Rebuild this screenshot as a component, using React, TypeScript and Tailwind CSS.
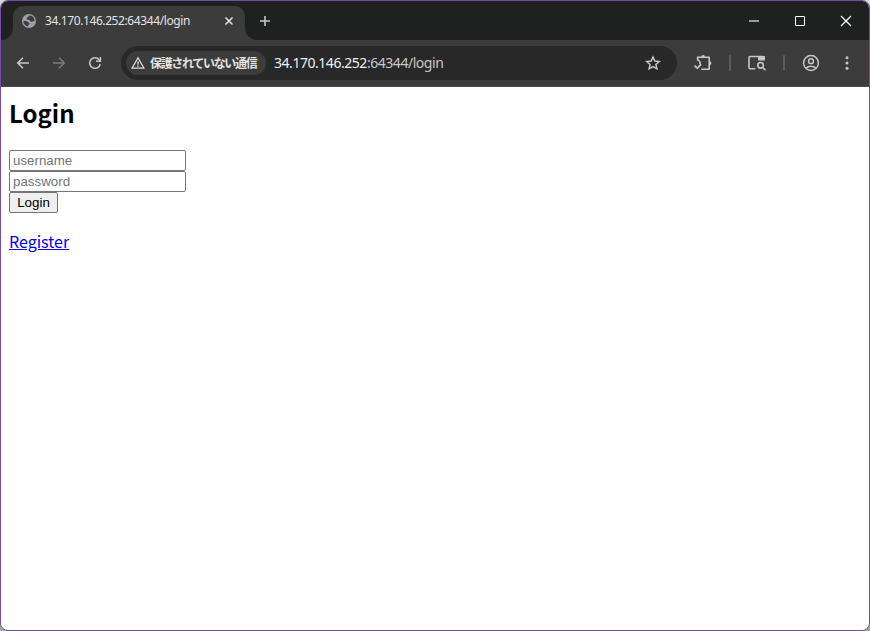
import React, { useState } from 'react';

const GlobeIcon = () => (
  <svg width="14" height="14" viewBox="0 0 14 14" className="shrink-0">
    <circle cx="7" cy="7" r="7" fill="#9aa0a6" />
    <path d="M8.3 1.6 C6.8 1.8 6.9 3 5.7 3.3 C4.4 3.6 4.3 5.5 5.8 5.7 C7.2 5.8 8 5.8 8.2 7 C8.4 8 9.4 7.8 10.2 7.6 C11 7.4 11.6 7 12.6 6.9 C12.5 4 10.9 1.9 8.3 1.6 Z" fill="#3c3c3c" />
    <path d="M1.4 7 C3.2 6.9 5.1 7 5.8 8 C6.4 8.9 7.6 8.7 7.5 9.8 C7.4 10.8 6 10.7 5.9 12.5 C3.2 12 1.4 9.8 1.4 7 Z" fill="#3c3c3c" />
  </svg>
);

const TabStrip = () => (
  <div className="flex h-[39px] bg-[#1f2020] pt-[5px]">
    <div className="flex w-3 items-end">
      <svg width="12" height="12" viewBox="0 0 12 12">
        <path d="M12 0 V12 H0 A12 12 0 0 0 12 0 Z" fill="#3c3c3c" />
      </svg>
    </div>
    <div className="flex w-[232px] items-center rounded-t-[10px] bg-[#3c3c3c] pr-[11px] pb-[5px] pl-[9px]">
      <GlobeIcon />
      <span className="ml-[9px] font-['Noto_Sans','Open_Sans',sans-serif] text-[12px] leading-4 tracking-[-0.4px] whitespace-nowrap text-[#e3e3e3]">
        34.170.146.252:64344/login
      </span>
      <svg width="10" height="10" viewBox="0 0 10 10" className="ml-auto" fill="none" stroke="#e3e3e3" strokeWidth="1.5">
        <path d="M1.5 1.5 L8.5 8.5 M8.5 1.5 L1.5 8.5" />
      </svg>
    </div>
    <div className="flex w-3 items-end">
      <svg width="12" height="12" viewBox="0 0 12 12">
        <path d="M0 0 V12 H12 A12 12 0 0 1 0 0 Z" fill="#3c3c3c" />
      </svg>
    </div>
    <div className="flex flex-1 items-center pr-[17px] pb-[5px]">
      <svg width="12" height="12" viewBox="0 0 12 12" className="ml-[2px]" fill="none" stroke="#c7c7c7" strokeWidth="1.6">
        <path d="M6 1 V11 M1 6 H11" />
      </svg>
      <div className="ml-auto flex items-center gap-[34px]">
        <svg width="12" height="12" viewBox="0 0 12 12" fill="none" stroke="#9a9a9a" strokeWidth="2">
          <path d="M1 6 H11" />
        </svg>
        <svg width="12" height="12" viewBox="0 0 12 12" fill="none" stroke="#ffffff">
          <rect x="1.5" y="1.5" width="9" height="9" rx="0.8" strokeWidth="1.1" />
        </svg>
        <svg width="12" height="12" viewBox="0 0 12 12" fill="none" stroke="#ffffff" strokeWidth="1.3">
          <path d="M1 1 L11 11 M11 1 L1 11" />
        </svg>
      </div>
    </div>
  </div>
);

const AddressBar = () => (
  <div className="ml-[18px] flex h-[34px] w-[556px] items-center rounded-full bg-[#282828] pr-4 pl-[5px]">
    <div className="flex h-6 w-[140px] items-center rounded-full bg-[#3c3c3c] pl-[5px]">
      <svg width="14" height="14" viewBox="0 0 14 14" className="shrink-0" fill="none" stroke="#dcdcdc" strokeWidth="1.3">
        <path d="M7 1.7 L13 12.2 H1 Z" />
        <path d="M7 5.3 V8.7 M7 9.6 V10.9" />
      </svg>
      <span className="ml-[5px] font-['Noto_Sans_CJK_JP',sans-serif] text-[12px] leading-4 font-bold tracking-[-1.33px] whitespace-nowrap text-[#e3e3e3]">
        保護されていない通信
      </span>
    </div>
    <span className="ml-2 font-['Noto_Sans','Open_Sans',sans-serif] text-[14px] leading-5 tracking-[-0.46px] whitespace-nowrap text-[#c7c7c7]">
      <span className="text-[#eeeeee]">34.170.146.252</span>:64344/login
    </span>
    <svg width="16" height="16" viewBox="0 0 16 16" className="ml-auto" fill="none" stroke="#c7c7c7" strokeWidth="1.5">
      <path d="M8 2 L9.8 6.1 L14.2 6.5 L10.9 9.4 L11.9 13.8 L8 11.5 L4.1 13.8 L5.1 9.4 L1.8 6.5 L6.2 6.1 Z" />
    </svg>
  </div>
);

const Toolbar = () => (
  <div className="flex h-[47px] items-center border-b border-[#4a4a4a] bg-[#3c3c3c] px-[14px]">
    <svg width="16" height="16" viewBox="0 0 16 16" fill="none" stroke="#c7c7c7" strokeWidth="1.5">
      <path d="M14 8 H3 M8 2.7 L2.7 8 L8 13.3" />
    </svg>
    <svg width="16" height="16" viewBox="0 0 16 16" className="ml-5" fill="none" stroke="#7c7c7c" strokeWidth="1.5">
      <path d="M2 8 H13 M8 2.7 L13.3 8 L8 13.3" />
    </svg>
    <svg width="16" height="16" viewBox="0 0 16 16" className="ml-5" fill="none" stroke="#c7c7c7" strokeWidth="1.5">
      <path d="M13.2 9 A5.3 5.3 0 1 1 12.2 4.8 L13.2 6" />
      <path d="M13.4 1.9 V6.3 H9" />
    </svg>
    <AddressBar />
    <svg width="20" height="20" viewBox="0 0 20 20" className="ml-4" fill="none" stroke="#c7c7c7" strokeWidth="1.6">
      <path d="M4.6 7.4 V4.3 H16.2 V16.3 H8.2" strokeLinejoin="round" />
      <path d="M8.2 4 A1.9 1.9 0 0 1 12 4 Z M16.5 8.3 A1.9 1.9 0 0 1 16.5 12.1 Z" fill="#c7c7c7" stroke="none" />
      <path d="M4.6 7 C6.4 7.3 7.8 9.4 6.8 11.3" />
      <path d="M1.4 12.6 L4.2 15.2 L8.2 11.4" />
    </svg>
    <div className="ml-4 h-4 w-0.5 rounded-full bg-[#5c5c5c]" />
    <svg width="18" height="16" viewBox="0 0 18 16" className="ml-[17px]" fill="none" stroke="#c7c7c7" strokeWidth="1.6">
      <path d="M16 5 V2.5 Q16 1.5 15 1.5 H2 Q1 1.5 1 2.5 V12.8 Q1 13.8 2 13.8 H7.2" />
      <path d="M10 1 H16.8 V5.4 H10 Z" fill="#c7c7c7" stroke="none" />
      <circle cx="12.6" cy="10.3" r="2.8" />
      <path d="M14.5 12.3 L17.5 15.3" />
    </svg>
    <div className="ml-[17px] h-4 w-0.5 rounded-full bg-[#5c5c5c]" />
    <svg width="18" height="18" viewBox="0 0 18 18" className="ml-[17px]" fill="none" stroke="#c7c7c7" strokeWidth="1.5">
      <circle cx="9" cy="9" r="7.4" />
      <circle cx="9" cy="7.2" r="2.4" />
      <path d="M4 14.2 C6.5 11.7 11.5 11.7 14 14.2" />
    </svg>
    <svg width="16" height="16" viewBox="0 0 16 16" className="ml-[19px]" fill="#c7c7c7">
      <circle cx="8" cy="2.8" r="1.5" />
      <circle cx="8" cy="8" r="1.5" />
      <circle cx="8" cy="13.2" r="1.5" />
    </svg>
  </div>
);

const LoginPage = () => {
  const [username, setUsername] = useState('');
  const [password, setPassword] = useState('');

  return (
    <main className="flex-1 bg-white pl-2 font-['Noto_Sans_CJK_JP',sans-serif] text-black">
      <h2 className="mt-2 text-2xl leading-[35px] font-bold">Login</h2>
      <form className="mt-5 flex flex-col items-start" onSubmit={(e) => e.preventDefault()}>
        <input
          className="h-[21px] w-[177px] rounded-xs border border-[#767676] px-[3px] font-['Liberation_Sans',sans-serif] text-[13.333px] leading-[15px] placeholder:text-[#757575]"
          placeholder="username"
          value={username}
          onChange={(e) => setUsername(e.target.value)}
        />
        <input
          type="password"
          className="h-[21px] w-[177px] rounded-xs border border-[#767676] px-[3px] font-['Liberation_Sans',sans-serif] text-[13.333px] leading-[15px] placeholder:text-[#757575]"
          placeholder="password"
          value={password}
          onChange={(e) => setPassword(e.target.value)}
        />
        <button className="h-[21px] w-[49px] rounded-xs border border-[#767676] bg-[#efefef] font-['Liberation_Sans',sans-serif] text-[13.333px] leading-[15px]">
          Login
        </button>
      </form>
      <a href="#register" className="mt-4 inline-block text-base leading-6 text-[#0000ee] underline">
        Register
      </a>
    </main>
  );
};

const App = () => {
  return (
    <div className="h-[631px] w-[870px] bg-linear-to-b from-[#d8d8d8] to-[#a5a5a5]">
      <div className="flex h-full flex-col overflow-hidden rounded-lg border border-[#744da9]">
        <TabStrip />
        <Toolbar />
        <LoginPage />
      </div>
    </div>
  );
};

export default App;
